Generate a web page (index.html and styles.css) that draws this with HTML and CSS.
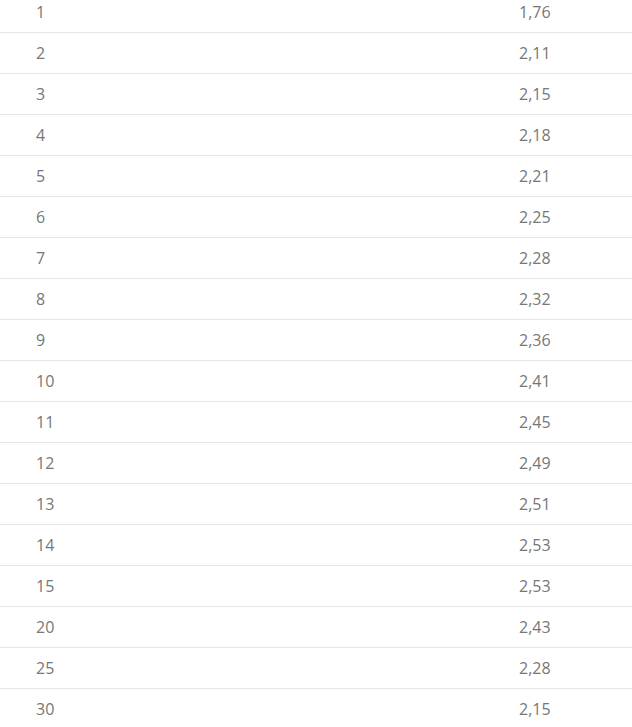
FILE: index.html
```html
<!DOCTYPE html>
<html lang="de">
<head>
<meta charset="utf-8">
<link rel="stylesheet" href="styles.css">
</head>
<body>
<table class="data">
<tbody>
<tr><td>1</td><td>1,76</td></tr>
<tr><td>2</td><td>2,11</td></tr>
<tr><td>3</td><td>2,15</td></tr>
<tr><td>4</td><td>2,18</td></tr>
<tr><td>5</td><td>2,21</td></tr>
<tr><td>6</td><td>2,25</td></tr>
<tr><td>7</td><td>2,28</td></tr>
<tr><td>8</td><td>2,32</td></tr>
<tr><td>9</td><td>2,36</td></tr>
<tr><td>10</td><td>2,41</td></tr>
<tr><td>11</td><td>2,45</td></tr>
<tr><td>12</td><td>2,49</td></tr>
<tr><td>13</td><td>2,51</td></tr>
<tr><td>14</td><td>2,53</td></tr>
<tr><td>15</td><td>2,53</td></tr>
<tr><td>20</td><td>2,43</td></tr>
<tr><td>25</td><td>2,28</td></tr>
<tr><td>30</td><td>2,15</td></tr>
</tbody>
</table>
</body>
</html>
```
FILE: styles.css
```css
html, body {
  margin: 0;
  padding: 0;
  background: #fff;
  overflow: hidden;
}
.data {
  width: 632px;
  border-collapse: collapse;
  margin-top: -8px;
  font-family: "Open Sans", "Liberation Sans", sans-serif;
  font-size: 16px;
  color: #777;
}
.data td {
  height: 40px;
  padding: 0 0 0 36px;
  border-bottom: 1px solid #e6e6e6;
  vertical-align: middle;
}
.data td:first-child {
  width: 447px;
}
```
